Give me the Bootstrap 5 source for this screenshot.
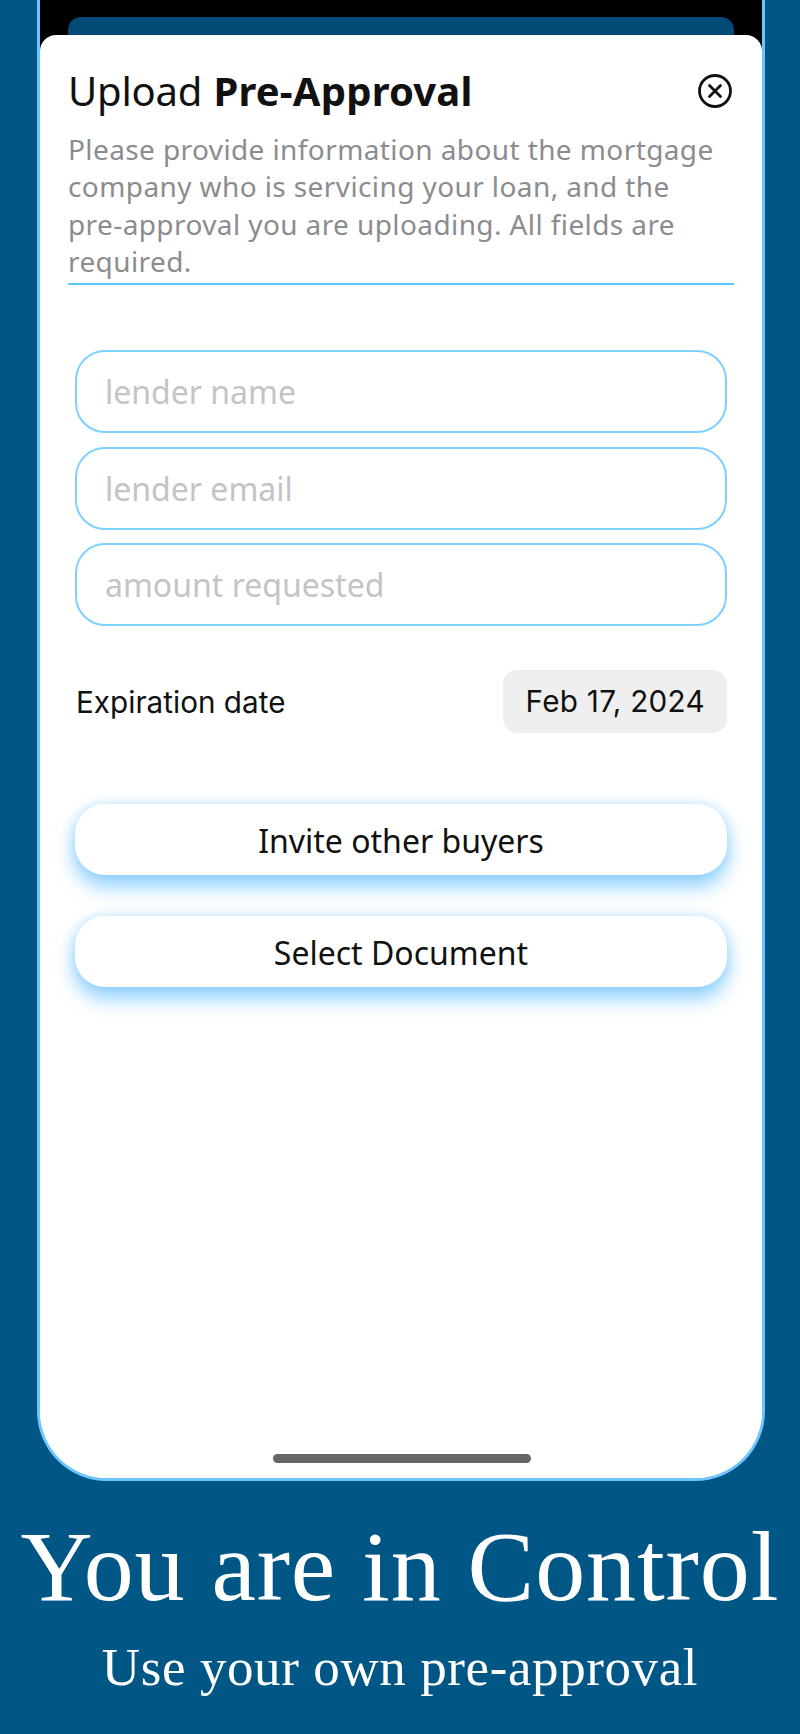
<!doctype html>
<html lang="en">
<head>
<meta charset="utf-8">
<title>Upload Pre-Approval</title>
<link href="https://cdn.jsdelivr.net/npm/bootstrap@5.3.0/dist/css/bootstrap.min.css" rel="stylesheet">
<style>
html,body{height:1734px;overflow:hidden}
body{background:#005685;font-family:"Noto Sans",sans-serif}
.phone-frame{width:728px;height:1481px;margin-left:37px;background:linear-gradient(#000 60px,#fff 60px);border:solid #6dc6ff;border-width:0 3px 3px;border-radius:0 0 70px 70px;overflow:hidden}
.top-tab{height:18px;margin:17px 28px 0;background:#014b76;border-radius:13px 13px 0 0}
.sheet{background:#fff;border-radius:16px 16px 0 0;padding:0 28px;height:1443px;position:relative}
.sheet-title{font-size:40px;line-height:50px;color:#111;font-weight:400;margin:0;padding-top:31px;height:96px;font-family:"Noto Sans",sans-serif;letter-spacing:-.2px}
.sheet-title b{font-weight:700;letter-spacing:.2px;margin-left:1px}
.close-mark{width:36px;height:36px;margin-top:38px;margin-right:1px}
.sheet-intro{font-size:28px;line-height:37.3px;letter-spacing:.4px;color:#8c8c8f;white-space:nowrap;margin:0;padding-bottom:3px;border-bottom:2px solid #5cc6ff}
.field-stack{margin:65px 7px 0}
.field-pill.form-control{height:83px;border:2px solid #7fcfff;border-radius:30px;font-size:32px;padding:0 28px;color:#222;margin-bottom:14px;box-shadow:none}
.field-pill.form-control:nth-child(3){margin-top:-1px}
.field-pill.form-control::placeholder{color:#c4c4c6;opacity:1}
.date-row{margin:44px 7px 0;height:63px}
.date-label,.date-chip{font-family:Inter,sans-serif;font-size:29.7px;color:#111}
.date-label{margin-left:1px;padding-top:2px}
.date-chip{background:#efefef;border-radius:14px;height:63px;padding:0 22px;line-height:63px;letter-spacing:.3px}
.glow-btn.btn{display:block;width:652px;height:71px;margin:71px 7px 0;background:#fff;border:0;border-radius:30px;font-size:32px;color:#111;padding:2px 0 0;box-shadow:0 11px 20px rgba(110,195,255,.8),0 0 12px rgba(110,195,255,.35)}
.glow-btn.btn+.glow-btn.btn{margin-top:41px}
.home-bar{position:absolute;left:233px;bottom:15px;width:258px;height:9px;background:#666;border-radius:5px}
.promo{color:#fff;font-family:"Liberation Serif",serif;white-space:nowrap;text-align:center}
.promo-main{font-size:100px;line-height:110px;margin-top:31px;letter-spacing:.9px}
.promo-sub{font-size:53px;line-height:60px;margin-top:14.5px;letter-spacing:.6px}
</style>
</head>
<body>
<div class="phone-frame">
  <div class="top-tab"></div>
  <div class="sheet">
    <div class="d-flex justify-content-between align-items-start">
      <h1 class="sheet-title">Upload <b>Pre-Approval</b></h1>
      <svg class="close-mark" viewBox="0 0 36 36" fill="none" stroke="#111" stroke-width="2.8" stroke-linecap="round" aria-label="close"><circle cx="18" cy="18" r="15.5"/><path d="M12.5 12.5l11 11M23.5 12.5l-11 11"/></svg>
    </div>
    <p class="sheet-intro">Please provide information about the mortgage<br>company who is servicing your loan, and the<br>pre-approval you are uploading. All fields are<br>required.</p>
    <div class="field-stack">
      <input class="form-control field-pill" type="text" placeholder="lender name">
      <input class="form-control field-pill" type="text" placeholder="lender email">
      <input class="form-control field-pill" type="text" placeholder="amount requested">
    </div>
    <div class="date-row d-flex justify-content-between align-items-center">
      <span class="date-label">Expiration date</span>
      <span class="date-chip">Feb 17, 2024</span>
    </div>
    <button class="btn glow-btn" type="button">Invite other buyers</button>
    <button class="btn glow-btn" type="button">Select Document</button>
    <div class="home-bar"></div>
  </div>
</div>
<div class="promo">
  <div class="promo-main">You are in Control</div>
  <div class="promo-sub">Use your own pre-approval</div>
</div>
<script src="https://cdn.jsdelivr.net/npm/bootstrap@5.3.0/dist/js/bootstrap.bundle.min.js"></script>
</body>
</html>
